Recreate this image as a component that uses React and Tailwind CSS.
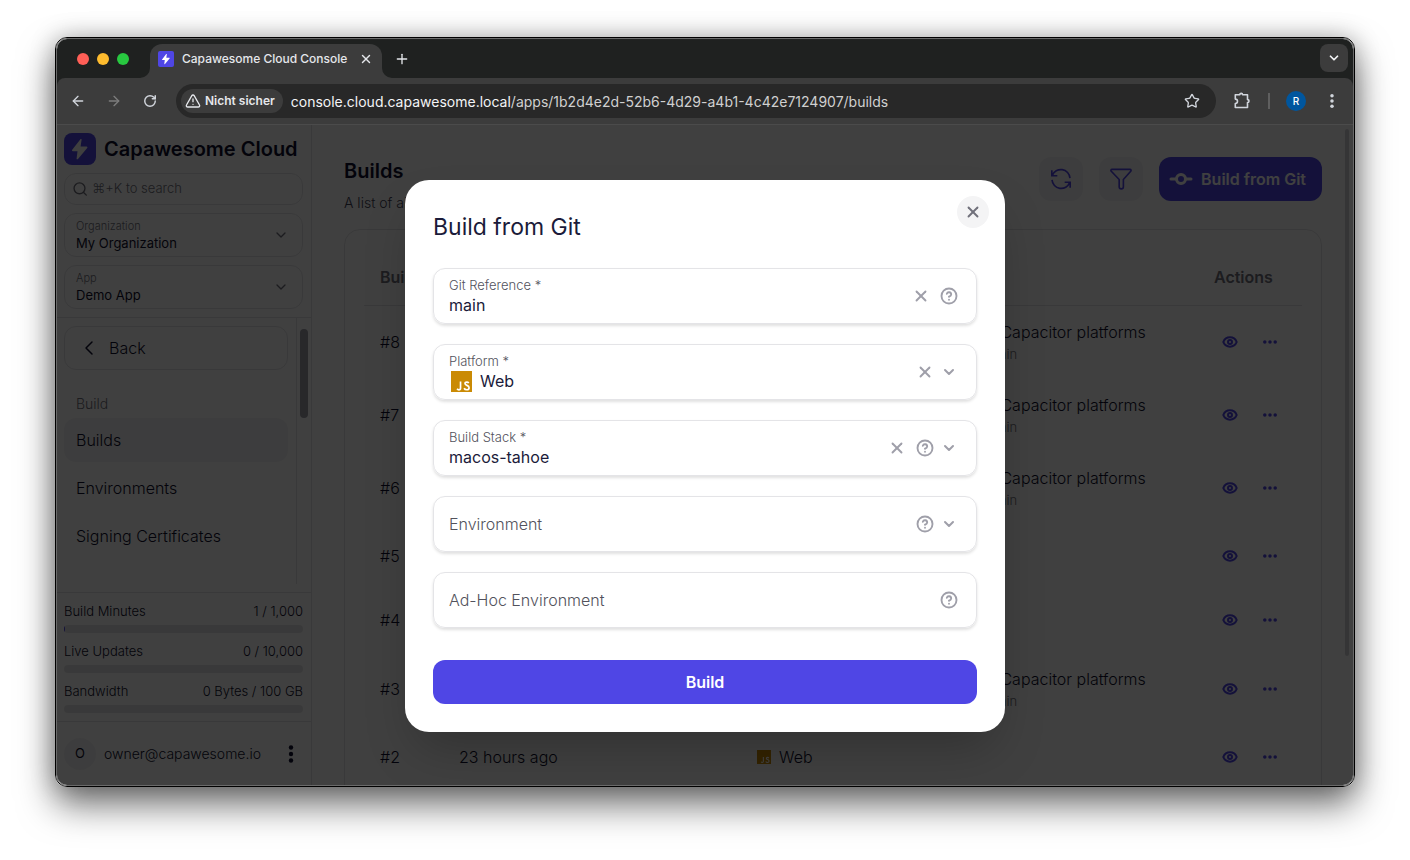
import { useState } from 'react';
import { ArrowLeft, ArrowRight, ChevronDown, ChevronLeft, CircleQuestionMark, Eye, Plus, RotateCw, Search, Star, TriangleAlert, X } from 'lucide-react';

const builds = [
    { id: 8, created: '2 hours ago', commit: 'Add Capacitor platforms', branch: 'main' },
    { id: 7, created: '2 hours ago', commit: 'Add Capacitor platforms', branch: 'main' },
    { id: 6, created: '3 hours ago', commit: 'Add Capacitor platforms', branch: 'main' },
    { id: 5, created: '5 hours ago' },
    { id: 4, created: '5 hours ago' },
    { id: 3, created: '22 hours ago', commit: 'Add Capacitor platforms', branch: 'main' },
    { id: 2, created: '23 hours ago' },
];

const usage = [
    { name: 'Build Minutes', value: '1 / 1,000', percent: 0.4 },
    { name: 'Live Updates', value: '0 / 10,000', percent: 0 },
    { name: 'Bandwidth', value: '0 Bytes / 100 GB', percent: 0 },
];

function Bolt({ className }) {
    return (
        <svg viewBox="0 0 32 32" className={className} fill="currentColor" aria-hidden="true">
            <path d="M17.6 6.8c.2-.8-.7-1.2-1.2-.6L8.2 16.8c-.5.6-.1 1.4.7 1.4h4.6l-.9 7.2c-.1.9.9 1.3 1.4.6l9.2-11c.5-.6.1-1.4-.7-1.4h-5.9z" />
        </svg>
    );
}

function JsIcon({ className }) {
    return (
        <svg viewBox="0 0 24 24" className={className} aria-hidden="true">
            <path d="M0 0h24v24H0z" fill="#ca8a04" />
            <path d="M10.9 12v7.4c0 1.4-.7 2.1-1.9 2.1-.8 0-1.500-.3-2-1.200" fill="none" stroke="#fff" strokeWidth="1.900" />
            <path d="M20.300 13.900c-.5-.8-1.200-1.200-2.200-1.200-1.300 0-2.100.7-2.100 1.700 0 2.500 4.700 1.600 4.700 4.600 0 1.500-1.100 2.400-2.800 2.400-1.300 0-2.400-.6-3-1.700" fill="none" stroke="#fff" strokeWidth="1.900" />
        </svg>
    );
}

function Dots({ className, vertical }) {
    return (
        <svg viewBox="0 0 20 20" className={className} fill="currentColor" aria-hidden="true">
            <g transform={vertical ? 'rotate(90 10 10)' : undefined}>
                <circle cx="3.500" cy="10" r="2.200" />
                <circle cx="10" cy="10" r="2.200" />
                <circle cx="16.500" cy="10" r="2.200" />
            </g>
        </svg>
    );
}

function TabStrip() {
    return (
        <div className="flex h-[39px] items-end bg-[#1f2120] pr-[5px]">
            <div className="flex h-full items-center gap-2 pr-[11px] pl-5">
                <span className="size-3 rounded-full bg-[#ff5f57]" />
                <span className="size-3 rounded-full bg-[#febc2e]" />
                <span className="size-3 rounded-full bg-[#28c840]" />
            </div>
            <svg viewBox="0 0 10 10" className="size-[10px]" fill="#3c3c3c" aria-hidden="true"><path d="M10 0A10 10 0 0 1 0 10H10z" /></svg>
            <div className="flex h-[34px] w-[232px] items-center rounded-t-xl bg-[#3c3c3c] pr-2 pb-1 pl-2 text-[12px] font-medium text-gray-200">
                <span className="mr-2 flex size-4 items-center justify-center rounded-xs bg-[#4f46e5] text-white">
                    <Bolt className="size-4" />
                </span>
                <span className="flex-1 whitespace-nowrap">Capawesome Cloud Console</span>
                <button type="button" aria-label="Close tab" className="flex size-4 items-center justify-center">
                    <X className="size-[14px]" strokeWidth={2.500} />
                </button>
            </div>
            <svg viewBox="0 0 10 10" className="size-[10px]" fill="#3c3c3c" aria-hidden="true"><path d="M0 0A10 10 0 0 0 10 10H0z" /></svg>
            <button type="button" aria-label="New tab" className="ml-[2px] flex h-full w-4 items-center justify-center text-gray-200">
                <Plus className="size-4" strokeWidth={2} />
            </button>
            <button type="button" aria-label="Search tabs" className="mb-[6px] ml-auto flex size-7 items-center justify-center rounded-lg bg-[#3c3c3c] text-gray-100">
                <ChevronDown className="size-[14px]" strokeWidth={3} />
            </button>
        </div>
    );
}

function Toolbar() {
    return (
        <div className="bg-[#1f2120]">
            <div className="flex h-[47px] items-center rounded-t-lg border-b border-[#4b4b4b] bg-[#3c3c3c] pr-[13px] pl-[11px] text-gray-300">
                <button type="button" aria-label="Back" className="flex w-5 justify-center"><ArrowLeft className="size-4" /></button>
                <button type="button" aria-label="Forward" className="ml-4 flex w-5 justify-center text-[#7c7c7c]"><ArrowRight className="size-4" /></button>
                <button type="button" aria-label="Reload" className="ml-4 flex w-5 justify-center"><RotateCw className="size-[14px]" strokeWidth={2.500} /></button>
                <div className="ml-4 flex h-[34px] min-w-0 flex-1 items-center rounded-full bg-[#282828] pr-4 pl-[5px]">
                    <span className="mr-2 flex h-6 items-center gap-1 rounded-full bg-[#3c3c3c] pr-2 pl-1 text-[12px] font-semibold whitespace-nowrap text-gray-200">
                        <TriangleAlert className="size-4" />
                        Nicht sicher
                    </span>
                    <span className="flex-1 truncate text-[14px] text-[#d0d0d0]">
                        <span className="text-gray-100">console.cloud.capawesome.local</span>/apps/1b2d4e2d-52b6-4d29-a4b1-4c42e7124907/builds
                    </span>
                    <button type="button" aria-label="Bookmark"><Star className="size-4" /></button>
                </div>
                <button type="button" aria-label="Extensions" className="ml-4">
                    <svg viewBox="0 0 20 20" className="size-5" fill="none" stroke="currentColor" strokeWidth="1.600" strokeLinejoin="round" aria-hidden="true">
                        <path d="M3.300 3.800H7.800a1.400 1.400 0 0 1 2.800 0H15.500V8.600a1.500 1.500 0 0 1 0 3V16.500H3.300V12.500a2.200 2.200 0 0 0 0-4.400z" />
                    </svg>
                </button>
                <span className="ml-4 h-4 w-[2px] bg-[#5f5f5f]" />
                <span className="ml-4 flex size-5 items-center justify-center rounded-full bg-[#00569e] text-[10px] font-medium text-white">R</span>
                <button type="button" aria-label="Menu" className="ml-[18px]"><Dots vertical className="size-4" /></button>
            </div>
        </div>
    );
}

function SideSelect({ id, label, value }) {
    return (
        <div className="relative rounded-xl border border-zinc-200 px-[11px] py-1">
            <label htmlFor={id} className="block text-[11px] leading-4 font-light text-zinc-500">{label}</label>
            <select id={id} defaultValue={value} className="block h-[18px] w-full appearance-none text-[13px] leading-4 text-[#0f0f2d] outline-none">
                <option>{value}</option>
            </select>
            <ChevronDown className="pointer-events-none absolute top-[13px] right-[13px] size-4 text-zinc-500" />
        </div>
    );
}

function Sidebar() {
    return (
        <aside className="flex w-[255px] shrink-0 flex-col border-r border-zinc-200">
            <div className="flex flex-col gap-2 border-b border-zinc-200 p-2 pl-[7px]">
                <div className="flex items-center gap-2">
                    <span className="flex size-8 items-center justify-center rounded-lg bg-[#4f46e5] text-zinc-50"><Bolt className="size-8" /></span>
                    <span className="text-[20px] leading-8 font-semibold whitespace-nowrap text-[#0f0f2d]">Capawesome Cloud</span>
                </div>
                <label className="flex h-8 items-center gap-1 rounded-xl border border-zinc-200 px-[7px] text-zinc-500">
                    <Search className="size-[18px]" />
                    <input type="text" aria-label="Search" placeholder="⌘+K to search" className="w-full text-[13px] font-light outline-none placeholder:text-zinc-500" />
                </label>
                <SideSelect id="organization" label="Organization" value="My Organization" />
                <SideSelect id="app" label="App" value="Demo App" />
            </div>
            <div className="flex min-h-0 flex-1 border-b border-zinc-200 pb-2 pl-[7px]">
                <nav className="flex flex-1 flex-col pt-2 text-[16px] font-light text-[#0f0f2d]">
                    <a href="#back" className="flex h-11 items-center gap-2 rounded-xl border border-zinc-200 px-3">
                        <ChevronLeft className="size-6" strokeWidth={1.500} />
                        Back
                    </a>
                    <span className="mt-6 mb-1 px-3 text-[14px] leading-5 text-zinc-500">Build</span>
                    <a href="#builds" className="flex h-11 items-center rounded-xl bg-zinc-100 px-3">Builds</a>
                    <a href="#environments" className="mt-1 flex h-11 items-center px-3">Environments</a>
                    <a href="#certificates" className="mt-1 flex h-11 items-center px-3">Signing Certificates</a>
                </nav>
                <div className="ml-2 w-[15px] border-l border-zinc-200 pt-[11px] pl-[3px]">
                    <div className="h-[89px] w-2 rounded-full bg-zinc-400" />
                </div>
            </div>
            <div className="flex flex-col gap-2 border-b border-zinc-200 p-2 pl-[7px] text-[13px] font-light text-[#0f0f2d]">
                {usage.map((item) => (
                    <div key={item.name}>
                        <div className="mb-[2px] flex h-[22px] items-center justify-between">
                            <span>{item.name}</span>
                            <span>{item.value}</span>
                        </div>
                        <div className="h-2 overflow-hidden rounded-full bg-zinc-200">
                            <div className="h-full bg-[#4f46e5]" style={{ width: `${item.percent}%` }} />
                        </div>
                    </div>
                ))}
            </div>
            <div className="flex h-[63px] items-center gap-2 pr-[10px] pl-[7px]">
                <span className="flex size-8 items-center justify-center rounded-full bg-zinc-100 text-[13px] text-[#0f0f2d]">O</span>
                <span className="flex-1 text-[14px] font-light text-[#0f0f2d]">owner@capawesome.io</span>
                <button type="button" aria-label="Account menu" className="text-[#0f0f2d]"><Dots vertical className="size-5" /></button>
            </div>
        </aside>
    );
}

function BuildsTable() {
    return (
        <table className="w-full table-fixed text-left text-[16px] text-[#0f0f2d]">
            <thead>
                <tr className="h-[55px] border-b border-zinc-200 text-zinc-500">
                    <th className="w-[79px] pl-4 font-semibold">Build</th>
                    <th className="w-[298px]" aria-label="Created" />
                    <th className="w-[209px] pl-4 font-semibold">Platform</th>
                    <th aria-label="Source" />
                    <th className="w-[104px] pl-4 font-semibold">Actions</th>
                </tr>
            </thead>
            <tbody className="font-light">
                {builds.map((build) => (
                    <tr key={build.id} className={build.commit ? 'h-[73px]' : 'h-16'}>
                        <td className="pl-4">#{build.id}</td>
                        <td className="pl-4">{build.created}</td>
                        <td className="pl-4">
                            <span className="flex items-center gap-2">
                                <JsIcon className="size-[14px]" />
                                Web
                            </span>
                        </td>
                        <td className="pl-4">
                            {build.commit && (
                                <>
                                    <div className="leading-6 whitespace-nowrap">{build.commit}</div>
                                    <div className="pl-[22px] text-[13px] leading-5 text-zinc-500">{build.branch}</div>
                                </>
                            )}
                        </td>
                        <td className="pl-4">
                            <span className="flex gap-6 pl-2 text-[#4f46e5]">
                                <button type="button" aria-label="View build"><Eye className="size-4" strokeWidth={3} /></button>
                                <button type="button" aria-label="More actions"><Dots className="size-4" /></button>
                            </span>
                        </td>
                    </tr>
                ))}
            </tbody>
        </table>
    );
}

function Main() {
    return (
        <main className="relative min-w-0 flex-1 overflow-hidden pt-8 pr-[31px] pl-8">
            <header className="flex items-start gap-4">
                <div className="flex-1">
                    <h1 className="text-[20px] leading-7 font-semibold text-[#0f0f2d]">Builds</h1>
                    <p className="mt-2 text-[14px] leading-5 font-light text-[#3f3f55]">A list of all builds of your app.</p>
                </div>
                <button type="button" aria-label="Refresh" className="flex size-11 items-center justify-center rounded-xl bg-zinc-100 text-[#4f46e5]">
                    <svg viewBox="0 0 24 24" className="size-[22px]" fill="none" stroke="currentColor" strokeWidth="1.800" aria-hidden="true">
                        <path d="M2 2.500v6H8M2.500 8.100A10 10 0 0 1 21.800 11M22 21.500v-6H16M21.500 15.900A10 10 0 0 1 2.200 13" />
                    </svg>
                </button>
                <button type="button" aria-label="Filter" className="flex size-11 items-center justify-center rounded-xl bg-zinc-100 text-[#4f46e5]">
                    <svg viewBox="0 0 24 24" className="size-[22px]" fill="none" stroke="currentColor" strokeWidth="1.800" strokeLinejoin="round" aria-hidden="true">
                        <path d="M2.200 1.500h19.600c1.200 0 1.500 1.200.8 2L14.600 12.500V20.500a2.300 2.300 0 0 1-4.600 0V12.500L1.400 3.500c-.7-.8-.4-2 .8-2z" />
                    </svg>
                </button>
                <button type="button" className="flex h-11 items-center gap-2 rounded-xl bg-[#4f46e5] pr-4 pl-[10px] text-[16px] font-semibold whitespace-nowrap text-white">
                    <svg viewBox="0 0 24 24" className="size-6" fill="none" stroke="currentColor" strokeWidth="3" aria-hidden="true">
                        <circle cx="12" cy="12" r="4.500" />
                        <path d="M2 12h5M17 12h5" strokeLinecap="round" />
                    </svg>
                    Build from Git
                </button>
            </header>
            <section className="mt-4 rounded-2xl border border-zinc-200 px-[19px] py-5">
                <BuildsTable />
            </section>
            <div className="absolute top-1 right-1 h-[527px] w-1 rounded-full bg-zinc-300" />
        </main>
    );
}

function Field({ id, label, value, icon, select, help, onClear, onChange }) {
    const filled = value !== '';
    const Control = select ? 'select' : 'input';
    const props = select ? { children: <option value={value}>{value}</option> } : { type: 'text' };

    return (
        <div className="relative flex h-14 items-center rounded-xl border border-zinc-200 pr-[15px] pl-[15px] shadow-[0_2px_3px_rgba(0,0,0,0.12)]">
            <div className="min-w-0 flex-1 pt-[2px]">
                {filled && <label htmlFor={id} className="block text-[13px] leading-4 font-light text-zinc-600">{label}</label>}
                {!filled && <label htmlFor={id} className="pointer-events-none absolute inset-y-0 flex items-center text-[16px] font-light text-zinc-600">{label}</label>}
                <div className="flex items-center gap-2">
                    {filled && icon}
                    <Control id={id} value={value} onChange={onChange} className="h-6 w-full appearance-none text-[16px] text-[#1b1b3a] outline-none" {...props} />
                </div>
            </div>
            <div className="flex items-center text-zinc-400">
                {filled && (
                    <button type="button" aria-label={`Clear ${label}`} onClick={onClear} className={help ? 'mr-1 flex size-6 items-center justify-center' : 'flex size-6 items-center justify-center'}>
                        <X className="size-[18px]" strokeWidth={2.500} />
                    </button>
                )}
                {help && <CircleQuestionMark className="mx-[3px] size-[18px]" strokeWidth={2.500} />}
                {select && <ChevronDown className="mx-1 size-4" strokeWidth={3} />}
            </div>
        </div>
    );
}

function BuildDialog() {
    const [form, setForm] = useState({ ref: 'main', platform: 'Web', stack: 'macos-tahoe', environment: '', adHoc: '' });
    const bind = (key) => ({
        id: key,
        value: form[key],
        onChange: (e) => setForm({ ...form, [key]: e.target.value }),
        onClear: () => setForm({ ...form, [key]: '' }),
    });

    return (
        <div className="absolute inset-0 flex items-center justify-center bg-black/75 pt-[2px]">
            <form role="dialog" aria-labelledby="dialog-title" className="relative w-full max-w-[600px] rounded-3xl bg-white p-7 shadow-2xl" onSubmit={(e) => e.preventDefault()}>
                <h2 id="dialog-title" className="text-[23px] leading-[38px] text-[#1b1b3a]">Build from Git</h2>
                <button type="button" aria-label="Close" className="absolute top-4 right-4 flex size-8 items-center justify-center rounded-full bg-zinc-100 text-zinc-500">
                    <X className="size-[18px]" strokeWidth={2.500} />
                </button>
                <div className="mt-[22px] flex flex-col gap-5">
                    <Field label="Git Reference *" help {...bind('ref')} />
                    <Field label="Platform *" select icon={<JsIcon className="ml-[2px] size-[21px] shrink-0" />} {...bind('platform')} />
                    <Field label="Build Stack *" select help {...bind('stack')} />
                    <Field label="Environment" select help {...bind('environment')} />
                    <Field label="Ad-Hoc Environment" help {...bind('adHoc')} />
                </div>
                <button type="submit" className="mt-8 h-11 w-full rounded-xl bg-[#4f46e5] text-[16px] font-semibold text-white">Build</button>
            </form>
        </div>
    );
}

export default function App() {
    return (
        <div className="h-screen bg-white px-[55px] pt-[37px] pb-[73px] font-[Inter,'Noto_Sans',sans-serif]">
            <div className="h-full rounded-xl border border-black shadow-[0_18px_36px_rgba(0,0,0,0.55),0_0_24px_rgba(0,0,0,0.25)]">
                <div className="flex h-full flex-col overflow-hidden rounded-[11px] border border-[#6a6a6a] bg-white">
                    <TabStrip />
                    <Toolbar />
                    <div className="relative flex min-h-0 flex-1">
                        <Sidebar />
                        <Main />
                        <BuildDialog />
                    </div>
                </div>
            </div>
        </div>
    );
}
